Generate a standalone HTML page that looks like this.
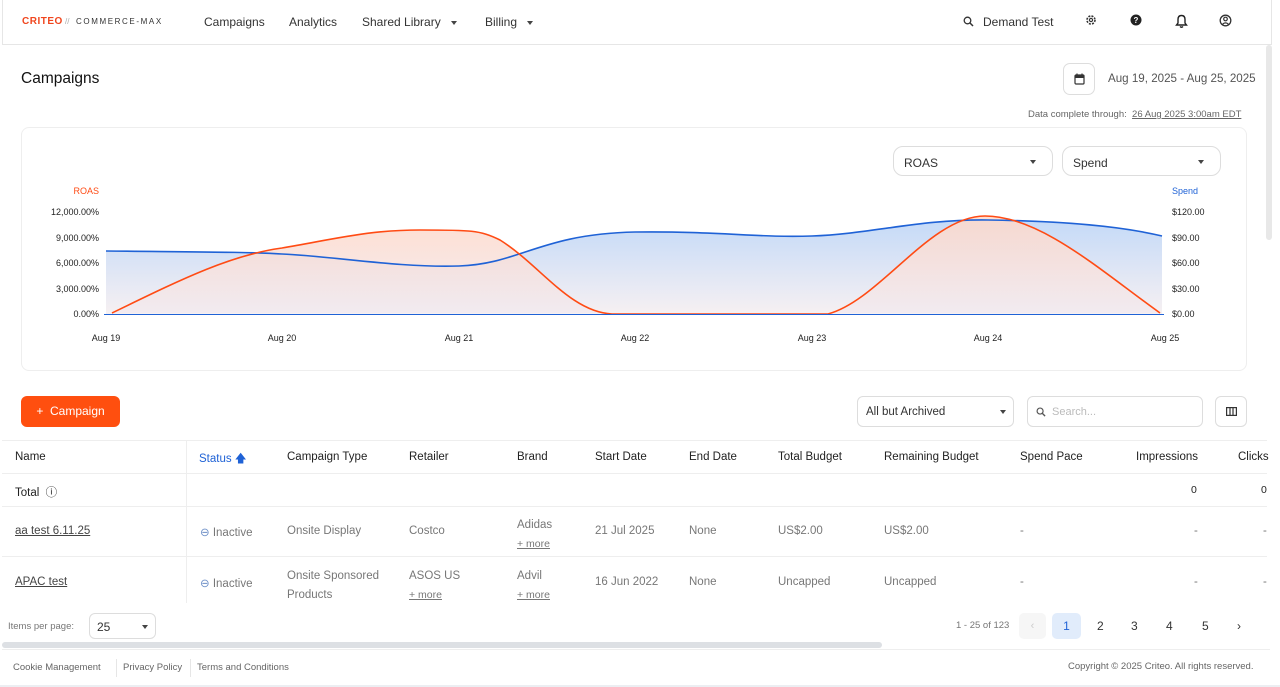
<!DOCTYPE html>
<html><head><meta charset="utf-8"><style>
*{box-sizing:border-box;margin:0;padding:0}
body{width:1280px;height:687px;overflow:hidden;background:#fff;font-family:"Liberation Sans",sans-serif;color:#222;position:relative}
.abs{position:absolute}
.nav{left:2px;top:0;width:1270px;height:45px;border:1px solid #e6e6e6;border-top:none;background:#fff}
.nav span{position:absolute;top:15px;font-size:12px;color:#333}
.nav svg{position:absolute}
.caret{display:inline-block;width:0;height:0;border-left:3px solid transparent;border-right:3px solid transparent;border-top:4px solid #444;margin-left:10px;vertical-align:middle}
.sel{border:1px solid #ddd;border-radius:10px;background:#fff;font-size:12px;color:#333}
.th{position:absolute;top:451px;font-size:11.5px;color:#222}
.td{position:absolute;font-size:11.5px;color:#777}
.hl{position:absolute;left:2px;width:1265px;height:1px;background:#eee}
.lnk{text-decoration:underline;color:#777}
.pg{position:absolute;top:619px;font-size:12px;color:#333}
</style></head><body>
<div class="abs nav">
 <span style="left:19px;top:16px;font-size:10px;font-weight:bold;color:#f0461e;letter-spacing:.5px">CRITEO</span>
 <span style="left:62px;top:17px;font-size:8px;color:#aaa">//</span>
 <span style="left:73px;top:17px;font-size:8px;letter-spacing:1.6px;color:#333">COMMERCE-MAX</span>
 <span style="left:201px">Campaigns</span>
 <span style="left:286px">Analytics</span>
 <span style="left:359px">Shared Library<i class="caret"></i></span>
 <span style="left:482px">Billing<i class="caret"></i></span>
 <svg style="left:960px;top:16px" width="11" height="11" viewBox="0 0 11 11"><circle cx="4.5" cy="4.5" r="3.3" fill="none" stroke="#333" stroke-width="1.3"/><path d="M7 7 L10 10" stroke="#333" stroke-width="1.5"/></svg>
 <span style="left:980px">Demand Test</span>
 <svg style="left:1082px;top:14px" width="12" height="12" viewBox="0 0 12 12"><circle cx="6" cy="6" r="4" fill="none" stroke="#333" stroke-width="1.6" stroke-dasharray="2 1.2"/><circle cx="6" cy="6" r="1.6" fill="none" stroke="#333" stroke-width="1.2"/></svg>
 <svg style="left:1127px;top:14px" width="12" height="12" viewBox="0 0 12 12"><circle cx="6" cy="6" r="5.5" fill="#222"/><text x="6" y="9" font-size="8" font-weight="bold" text-anchor="middle" fill="#fff" font-family="Liberation Sans">?</text></svg>
 <svg style="left:1172px;top:14px" width="13" height="15" viewBox="0 0 13 15"><path d="M6.5 1.5 C3.8 1.5 3 3.5 3 5.5 L3 9 L1.5 11 L11.5 11 L10 9 L10 5.5 C10 3.5 9.2 1.5 6.5 1.5Z" fill="none" stroke="#222" stroke-width="1.4"/><path d="M5 12.5 Q6.5 14 8 12.5" fill="none" stroke="#222" stroke-width="1.3"/></svg>
 <svg style="left:1216px;top:14px" width="13" height="13" viewBox="0 0 13 13"><circle cx="6.5" cy="6.5" r="5.3" fill="none" stroke="#333" stroke-width="1.3"/><circle cx="6.5" cy="5" r="1.8" fill="none" stroke="#333" stroke-width="1.2"/><path d="M3.5 10.3 Q6.5 7.5 9.5 10.3" fill="none" stroke="#333" stroke-width="1.2"/></svg>
</div>
<div class="abs" style="left:1266px;top:45px;width:6px;height:195px;background:#e8e8e8;border-radius:3px"></div>
<div class="abs" style="left:21px;top:70px;font-size:15.5px;color:#111">Campaigns</div>
<div class="abs" style="left:1063px;top:63px;width:32px;height:32px;border:1px solid #ddd;border-radius:7px"><svg style="position:absolute;left:10px;top:9px" width="11" height="12" viewBox="0 0 11 12"><rect x="1" y="2" width="9" height="9" rx="1" fill="none" stroke="#333" stroke-width="1.2"/><rect x="1" y="2" width="9" height="3" fill="#333"/><path d="M3 0.5v2M8 0.5v2" stroke="#333" stroke-width="1.2"/></svg></div>
<div class="abs" style="left:1108px;top:72px;font-size:11.6px;color:#555">Aug 19, 2025 - Aug 25, 2025</div>
<div class="abs" style="left:1028px;top:109px;font-size:9.5px;color:#666">Data complete through: &nbsp;<u>26 Aug 2025 3:00am EDT</u></div>
<div class="abs" style="left:21px;top:127px;width:1226px;height:244px;border:1px solid #eee;border-radius:8px"></div>
<div class="abs sel" style="left:893px;top:146px;width:160px;height:30px;padding:9px 10px">ROAS<i class="caret" style="position:absolute;right:16px;top:13px;margin:0"></i></div>
<div class="abs sel" style="left:1062px;top:146px;width:159px;height:30px;padding:9px 10px">Spend<i class="caret" style="position:absolute;right:16px;top:13px;margin:0"></i></div>
<svg class="abs" style="left:0;top:0" width="1280" height="400">
<defs>
<linearGradient id="b" x1="0" y1="0" x2="0" y2="1"><stop offset="0" stop-color="#c4daf8"/><stop offset="1" stop-color="#f6f0f2"/></linearGradient>
<linearGradient id="o" x1="0" y1="0" x2="0" y2="1"><stop offset="0" stop-color="#ffd8c8"/><stop offset="1" stop-color="#f1eaf0"/></linearGradient>
</defs>
<path d="M106,251 C200,252 250,252 282,254 C330,256 400,268 459,266 C520,264 540,234 635,232 C720,231 760,238 812,236 C870,234 920,219 988,220 C1060,221 1120,226 1162,236 L1162,314 L106,314Z" fill="url(#b)"/>
<path d="M112,313 C180,280 230,255 282,248 C340,238 370,230 420,230 C470,230 480,230 500,240 C540,265 570,312 612,314 L828,314 C880,300 930,216 985,216 C1040,216 1100,270 1160,313Z" fill="url(#o)" opacity=".85"/>
<path d="M106,251 C200,252 250,252 282,254 C330,256 400,268 459,266 C520,264 540,234 635,232 C720,231 760,238 812,236 C870,234 920,219 988,220 C1060,221 1120,226 1162,236" fill="none" stroke="#1f62d6" stroke-width="1.6"/>
<path d="M112,313 C180,280 230,255 282,248 C340,238 370,230 420,230 C470,230 480,230 500,240 C540,265 570,312 612,314 L828,314 C880,300 930,216 985,216 C1040,216 1100,270 1160,313" fill="none" stroke="#ff4b14" stroke-width="1.6"/>
<line x1="104" y1="314.5" x2="1164" y2="314.5" stroke="#1f62d6" stroke-width="1"/>
<g font-family="Liberation Sans" font-size="9" fill="#222">
<text x="99" y="194" text-anchor="end" fill="#ff4b14">ROAS</text>
<text x="99" y="215" text-anchor="end">12,000.00%</text><text x="99" y="241" text-anchor="end">9,000.00%</text><text x="99" y="266" text-anchor="end">6,000.00%</text><text x="99" y="292" text-anchor="end">3,000.00%</text><text x="99" y="317" text-anchor="end">0.00%</text>
<text x="1172" y="194" fill="#1f62d6">Spend</text>
<text x="1172" y="215">$120.00</text><text x="1172" y="241">$90.00</text><text x="1172" y="266">$60.00</text><text x="1172" y="292">$30.00</text><text x="1172" y="317">$0.00</text>
<g text-anchor="middle"><text x="106" y="341">Aug 19</text><text x="282" y="341">Aug 20</text><text x="459" y="341">Aug 21</text><text x="635" y="341">Aug 22</text><text x="812" y="341">Aug 23</text><text x="988" y="341">Aug 24</text><text x="1165" y="341">Aug 25</text></g>
</g></svg>
<div class="abs" style="left:21px;top:396px;width:99px;height:31px;background:#ff4f0f;border-radius:6px;color:#fff;font-size:12px;line-height:31px;text-align:center">+&nbsp; Campaign</div>
<div class="abs sel" style="left:857px;top:396px;width:157px;height:31px;border-radius:6px;padding:9px 8px;font-size:11.5px">All but Archived<i class="caret" style="position:absolute;right:7px;top:13px;margin:0"></i></div>
<div class="abs sel" style="left:1027px;top:396px;width:176px;height:31px;border-radius:6px;padding:9px 8px 9px 24px;font-size:11px;color:#bbb">Search...<svg style="position:absolute;left:8px;top:10px" width="10" height="10" viewBox="0 0 11 11"><circle cx="4.5" cy="4.5" r="3.3" fill="none" stroke="#555" stroke-width="1.3"/><path d="M7 7 L10 10" stroke="#555" stroke-width="1.5"/></svg></div>
<div class="abs sel" style="left:1215px;top:396px;width:32px;height:31px;border-radius:6px"><svg style="position:absolute;left:10px;top:10px" width="11" height="9" viewBox="0 0 11 9"><rect x=".6" y=".6" width="9.8" height="7.8" fill="none" stroke="#333" stroke-width="1.2"/><path d="M4 1v7M7 1v7" stroke="#333" stroke-width="1.2"/></svg></div>
<div class="hl" style="top:440px"></div><div class="hl" style="top:473px"></div><div class="hl" style="top:506px"></div><div class="hl" style="top:556px"></div>
<div class="abs" style="left:186px;top:440px;width:1px;height:163px;background:#eee"></div>
<div class="th" style="left:15px">Name</div>
<div class="th" style="left:199px;color:#1f62d6">Status &#129093;</div>
<div class="th" style="left:287px">Campaign Type</div>
<div class="th" style="left:409px">Retailer</div>
<div class="th" style="left:517px">Brand</div>
<div class="th" style="left:595px">Start Date</div>
<div class="th" style="left:689px">End Date</div>
<div class="th" style="left:778px">Total Budget</div>
<div class="th" style="left:884px">Remaining Budget</div>
<div class="th" style="left:1020px">Spend Pace</div>
<div class="th" style="left:1136px">Impressions</div>
<div class="th" style="left:1238px">Clicks</div>
<div class="td" style="left:15px;top:484px;color:#222">Total &nbsp;&#9432;</div>
<div class="td" style="left:1191px;top:484px;color:#222;font-size:10.5px">0</div>
<div class="td" style="left:1261px;top:484px;color:#222;font-size:10.5px">0</div>
<div class="td lnk" style="left:15px;top:525px;color:#444">aa test 6.11.25</div>
<div class="td" style="left:200px;top:525px"><span style="color:#6d8fc7">&#8854;</span> Inactive</div>
<div class="td" style="left:287px;top:525px">Onsite Display</div>
<div class="td" style="left:409px;top:525px">Costco</div>
<div class="td" style="left:517px;top:516px;line-height:19px">Adidas<br><span class="lnk" style="font-size:10.5px">+ more</span></div>
<div class="td" style="left:595px;top:525px">21 Jul 2025</div>
<div class="td" style="left:689px;top:525px">None</div>
<div class="td" style="left:778px;top:525px">US$2.00</div>
<div class="td" style="left:884px;top:525px">US$2.00</div>
<div class="td" style="left:1020px;top:525px">-</div><div class="td" style="left:1194px;top:525px">-</div><div class="td" style="left:1263px;top:525px">-</div>
<div class="td lnk" style="left:15px;top:576px;color:#444">APAC test</div>
<div class="td" style="left:200px;top:576px"><span style="color:#6d8fc7">&#8854;</span> Inactive</div>
<div class="td" style="left:287px;top:567px;line-height:19px">Onsite Sponsored<br>Products</div>
<div class="td" style="left:409px;top:567px;line-height:19px">ASOS US<br><span class="lnk" style="font-size:10.5px">+ more</span></div>
<div class="td" style="left:517px;top:567px;line-height:19px">Advil<br><span class="lnk" style="font-size:10.5px">+ more</span></div>
<div class="td" style="left:595px;top:576px">16 Jun 2022</div>
<div class="td" style="left:689px;top:576px">None</div>
<div class="td" style="left:778px;top:576px">Uncapped</div>
<div class="td" style="left:884px;top:576px">Uncapped</div>
<div class="td" style="left:1020px;top:576px">-</div><div class="td" style="left:1194px;top:576px">-</div><div class="td" style="left:1263px;top:576px">-</div>
<div class="abs" style="left:8px;top:621px;font-size:9.5px;color:#777">Items per page:</div>
<div class="abs sel" style="left:89px;top:613px;width:67px;height:26px;border-radius:6px;padding:6px 7px">25<i class="caret" style="position:absolute;right:7px;top:11px;margin:0"></i></div>
<div class="abs" style="left:956px;top:620px;font-size:9.5px;color:#777">1 - 25 of 123</div>
<div class="abs" style="left:1019px;top:613px;width:27px;height:26px;background:#f6f6f6;border-radius:5px;color:#ccc;text-align:center;line-height:26px;font-size:11px">&lsaquo;</div>
<div class="abs" style="left:1052px;top:613px;width:29px;height:26px;background:#e1ecfb;border-radius:5px;color:#1f62d6;text-align:center;line-height:26px;font-size:12px">1</div>
<div class="pg" style="left:1097px">2</div><div class="pg" style="left:1131px">3</div><div class="pg" style="left:1166px">4</div><div class="pg" style="left:1202px">5</div><div class="pg" style="left:1237px">&rsaquo;</div>
<div class="abs" style="left:2px;top:642px;width:880px;height:6px;background:#dde0e4;border-radius:3px"></div>
<div class="abs" style="left:2px;top:649px;width:1268px;height:1px;background:#eee"></div>
<div class="abs" style="left:13px;top:662px;font-size:9.5px;color:#666">Cookie Management</div>
<div class="abs" style="left:116px;top:659px;width:1px;height:18px;background:#e6e6e6"></div>
<div class="abs" style="left:123px;top:662px;font-size:9.5px;color:#666">Privacy Policy</div>
<div class="abs" style="left:190px;top:659px;width:1px;height:18px;background:#e6e6e6"></div>
<div class="abs" style="left:197px;top:662px;font-size:9.5px;color:#666">Terms and Conditions</div>
<div class="abs" style="left:1068px;top:661px;font-size:9.5px;color:#666">Copyright © 2025 Criteo. All rights reserved.</div>
<div class="abs" style="left:0;top:685px;width:1280px;height:2px;background:#eceef2"></div>
</body></html>
